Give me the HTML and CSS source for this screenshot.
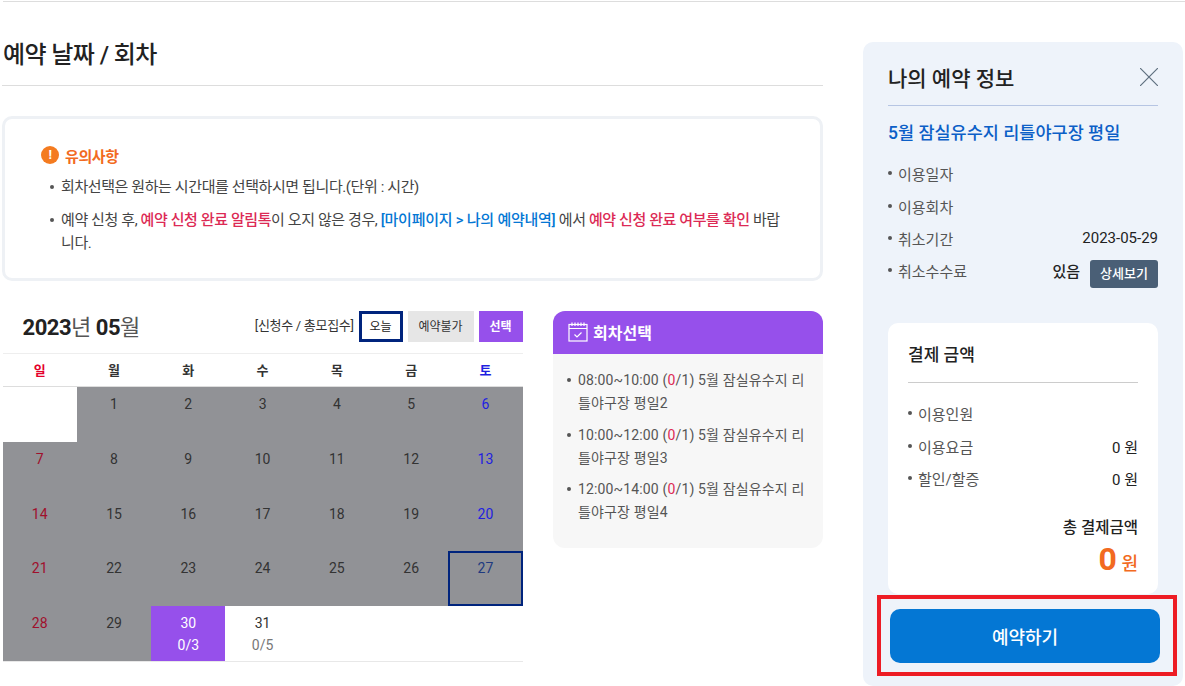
FILE: index.html
```html
<!DOCTYPE html>
<html lang="ko">
<head>
    <meta charset="UTF-8">
    <meta name="viewport" content="width=device-width, initial-scale=1.0">
    <title>예약 날짜 / 회차</title>
    <link rel="stylesheet" href="styles.css">
</head>
<body>
    <div class="top-line"></div>
    <div class="layout">
        <div class="main">
            <h2 class="page-title">예약 날짜 / 회차</h2>

            <div class="notice">
                <div class="notice-title">
                    <span class="notice-icon">!</span>
                    유의사항
                </div>
                <ul class="notice-list">
                    <li>회차선택은 원하는 시간대를 선택하시면 됩니다.(단위 : 시간)</li>
                    <li>예약 신청 후, <b class="red">예약 신청 완료 알림톡</b>이 오지 않은 경우, <b class="blue">[마이페이지 &gt; 나의 예약내역]</b> 에서 <b class="red">예약 신청 완료 여부를 확인</b> 바랍니다.</li>
                </ul>
            </div>

            <div class="booking">
                <div class="calendar">
                    <div class="cal-head">
                        <div class="cal-month"><b>2023</b>년 <b>05</b>월</div>
                        <div class="legend">
                            <span class="legend-text">[신청수 / 총모집수]</span>
                            <span class="legend-box today">오늘</span>
                            <span class="legend-box closed">예약불가</span>
                            <span class="legend-box selected">선택</span>
                        </div>
                    </div>
                    <div class="cal-week">
                        <div class="sun">일</div>
                        <div>월</div>
                        <div>화</div>
                        <div>수</div>
                        <div>목</div>
                        <div>금</div>
                        <div class="sat">토</div>
                    </div>
                    <div class="cal-grid">
                        <div class="cell"></div>
                        <div class="cell off">1</div>
                        <div class="cell off">2</div>
                        <div class="cell off">3</div>
                        <div class="cell off">4</div>
                        <div class="cell off">5</div>
                        <div class="cell off sat">6</div>
                        <div class="cell off sun">7</div>
                        <div class="cell off">8</div>
                        <div class="cell off">9</div>
                        <div class="cell off">10</div>
                        <div class="cell off">11</div>
                        <div class="cell off">12</div>
                        <div class="cell off sat">13</div>
                        <div class="cell off sun">14</div>
                        <div class="cell off">15</div>
                        <div class="cell off">16</div>
                        <div class="cell off">17</div>
                        <div class="cell off">18</div>
                        <div class="cell off">19</div>
                        <div class="cell off sat">20</div>
                        <div class="cell off sun">21</div>
                        <div class="cell off">22</div>
                        <div class="cell off">23</div>
                        <div class="cell off">24</div>
                        <div class="cell off">25</div>
                        <div class="cell off">26</div>
                        <div class="cell off sat is-today">27</div>
                        <div class="cell off sun">28</div>
                        <div class="cell off">29</div>
                        <div class="cell picked">30<span class="count">0/3</span></div>
                        <div class="cell">31<span class="count">0/5</span></div>
                        <div class="cell"></div>
                        <div class="cell"></div>
                        <div class="cell"></div>
                    </div>
                </div>

                <div class="rounds">
                    <div class="rounds-head">
                        <svg width="20" height="20" viewBox="0 0 20 20" fill="none" stroke="#fff" stroke-width="1.2">
                            <rect x="1" y="2.5" width="18" height="16.5"/>
                            <path d="M1 6.5h18M4 .5v3.5M7 .5v3.5M10 .5v3.5M13 .5v3.5M16 .5v3.5"/>
                            <path d="M6.5 12.5l2.5 2.5 4.5-4.5"/>
                        </svg>
                        회차선택
                    </div>
                    <ul class="rounds-list">
                        <li>08:00~10:00 (<span class="zero">0</span>/1) 5월 잠실유수지 리틀야구장 평일2</li>
                        <li>10:00~12:00 (<span class="zero">0</span>/1) 5월 잠실유수지 리틀야구장 평일3</li>
                        <li>12:00~14:00 (<span class="zero">0</span>/1) 5월 잠실유수지 리틀야구장 평일4</li>
                    </ul>
                </div>
            </div>
        </div>

        <div class="side">
            <div class="side-head">
                <h3>나의 예약 정보</h3>
                <svg width="18" height="18" viewBox="0 0 18 18" stroke="#5f7080" stroke-width="1.2">
                    <path d="M0 0l18 18M18 0L0 18"/>
                </svg>
            </div>
            <div class="side-name">5월 잠실유수지 리틀야구장 평일</div>
            <ul class="info-list">
                <li><span class="info-label">이용일자</span></li>
                <li><span class="info-label">이용회차</span></li>
                <li><span class="info-label">취소기간</span><span class="info-value">2023-05-29</span></li>
                <li class="fee-row"><span class="info-label">취소수수료</span><span class="info-value"><b>있음</b><a class="detail-btn">상세보기</a></span></li>
            </ul>

            <div class="pay-card">
                <h4>결제 금액</h4>
                <ul class="info-list">
                    <li><span class="info-label">이용인원</span></li>
                    <li><span class="info-label">이용요금</span><span class="info-value">0 원</span></li>
                    <li><span class="info-label">할인/할증</span><span class="info-value">0 원</span></li>
                </ul>
                <div class="total-label">총 결제금액</div>
                <div class="total-value"><b>0</b> 원</div>
            </div>

            <button class="reserve-btn">예약하기</button>
            <div class="red-frame"></div>
        </div>
    </div>
</body>
</html>
```

FILE: styles.css
```css
html, body {
    margin: 0;
    height: 686px;
    overflow: hidden;
    background-color: #fff;
    font-family: Roboto, "Noto Sans CJK KR", sans-serif;
    color: #333;
}
ul {
    margin: 0;
    padding: 0;
    list-style: none;
}
.top-line {
    height: 1px;
    margin: 1px 0 0 3px;
    background-color: #ddd;
}
.layout {
    display: flex;
    padding: 40px 0 0 2px;
}
.main {
    width: 821px;
}
.page-title {
    height: 44px;
    margin: 0;
    padding: 1px 0 0 1px;
    box-sizing: border-box;
    border-bottom: 1px solid #ddd;
    font-size: 24px;
    line-height: 24px;
    font-weight: 500;
    color: #222;
    letter-spacing: -0.6px;
}

/* 유의사항 */
.notice {
    box-sizing: border-box;
    height: 165px;
    margin-top: 30px;
    padding: 26px 35px 0 36px;
    border: 3px solid #eef1f5;
    border-radius: 10px;
    font-size: 15px;
    letter-spacing: -0.4px;
}
.notice-title {
    display: flex;
    align-items: center;
    gap: 6px;
    height: 20px;
    font-size: 15px;
    font-weight: 700;
    color: #f26a21;
}
.notice-icon {
    width: 18px;
    height: 18px;
    border-radius: 50%;
    background-color: #f47b20;
    color: #fff;
    font-size: 13px;
    line-height: 18px;
    text-align: center;
}
.notice-list {
    margin-top: 11px;
}
.notice-list li {
    position: relative;
    padding-left: 20px;
    margin-bottom: 10px;
    line-height: 23px;
    color: #444;
}
.notice-list li::before,
.rounds-list li::before,
.info-label::before {
    content: '';
    position: absolute;
    left: 9px;
    top: 9px;
    width: 4px;
    height: 4px;
    border-radius: 50%;
    background-color: #555;
}
.notice-list b {
    font-weight: 500;
}
.red {
    color: #dc2a55;
}
.blue {
    color: #0477d4;
    letter-spacing: -0.25px;
}

/* 달력 */
.booking {
    display: flex;
    align-items: flex-start;
    margin-top: 29px;
}
.calendar {
    width: 520px;
    margin-left: 0.6px;
}
.cal-head {
    display: flex;
    justify-content: space-between;
    align-items: center;
    height: 32px;
    padding-left: 20px;
}
.cal-month {
    margin-bottom: 3px;
    font-size: 22px;
    letter-spacing: -0.5px;
    color: #555;
}
.cal-month b {
    color: #222;
}
.legend {
    display: flex;
    align-items: center;
    font-size: 13px;
}
.legend-text {
    margin: 0 5px 3px 0;
    letter-spacing: -0.3px;
}
.legend-box {
    box-sizing: border-box;
    height: 31px;
    margin-left: 5px;
    font-size: 12px;
    line-height: 33px;
    text-align: center;
}
.legend-box.today {
    width: 44px;
    margin-left: 0;
    border: 3px solid #00247d;
    line-height: 27px;
    color: #222;
}
.legend-box.closed {
    width: 66px;
    background-color: #e6e6e6;
}
.legend-box.selected {
    width: 44px;
    background-color: #9650eb;
    color: #fff;
    font-weight: 700;
}
.cal-week {
    display: grid;
    grid-template-columns: repeat(7, 1fr);
    height: 32px;
    margin-top: 11px;
    border-top: 1px solid #eee;
    border-bottom: 1px solid #ddd;
    font-size: 13px;
    font-weight: 700;
    line-height: 33px;
    text-align: center;
}
.cal-week .sun {
    color: #e4002b;
}
.cal-week .sat {
    color: #1f1fe0;
}
.cal-grid {
    display: grid;
    grid-template-columns: repeat(7, 1fr);
    grid-auto-rows: 54.8px;
    border-bottom: 1px solid #e8e8e8;
}
.cell {
    box-sizing: border-box;
    padding-top: 7px;
    font-size: 14px;
    line-height: 20px;
    text-align: center;
}
.cell.off {
    background-color: #919296;
}
.cell.sun {
    color: #a0102c;
}
.cell.sat {
    color: #1f1fe0;
}
.cell.is-today {
    padding-top: 5px;
    border: 2px solid #00247d;
    color: #1f3a80;
}
.cell.picked {
    background-color: #9650eb;
    color: #fff;
}
.count {
    display: block;
    margin-top: 2px;
    color: #777;
}
.picked .count {
    color: #fff;
}

/* 회차선택 */
.rounds {
    width: 270px;
    margin: 1px 0 0 30.4px;
    border-radius: 12px;
    background-color: #f7f7f7;
    overflow: hidden;
}
.rounds-head {
    box-sizing: border-box;
    display: flex;
    align-items: center;
    gap: 5px;
    height: 43px;
    padding: 0 0 2px 15px;
    background-color: #9650eb;
    color: #fff;
    font-size: 16px;
    font-weight: 700;
}
.rounds-list {
    padding: 15px 15px 15px 25px;
}
.rounds-list li {
    position: relative;
    margin-bottom: 8.5px;
    font-size: 14px;
    line-height: 23px;
    letter-spacing: 0.15px;
    color: #555;
}
.rounds-list li::before {
    left: -11px;
}
.zero {
    color: #dc2a55;
}

/* 나의 예약 정보 */
.side {
    position: relative;
    box-sizing: border-box;
    width: 320px;
    height: 644px;
    margin-left: 40px;
    padding: 0 25px;
    border-radius: 10px;
    background-color: #eef3fa;
}
.side-head {
    display: flex;
    justify-content: space-between;
    align-items: center;
    height: 63px;
    border-bottom: 1px solid #b6c5e3;
}
.side-head h3 {
    margin: 6px 0 0;
    font-size: 21px;
    font-weight: 500;
    color: #222;
}
.side-head svg {
    margin-top: 6px;
}
.side-name {
    margin-top: 15px;
    font-size: 17.5px;
    font-weight: 500;
    line-height: 24px;
    color: #0c5fc7;
}
.side > .info-list {
    margin-top: 12.5px;
}
.info-list li {
    display: flex;
    justify-content: space-between;
    align-items: center;
    height: 32.4px;
    font-size: 15px;
}
.info-label {
    position: relative;
    padding-left: 10px;
    color: #555;
}
.info-label::before {
    left: 0;
    top: 8px;
}
.info-value {
    display: flex;
    align-items: center;
    color: #222;
}
.info-value b {
    font-weight: 500;
}
.detail-btn {
    width: 68px;
    height: 28px;
    margin: 7px 0 0 10px;
    border-radius: 3px;
    background-color: #4a5f76;
    color: #fff;
    font-size: 13px;
    font-weight: 500;
    line-height: 28px;
    text-align: center;
}

/* 결제 금액 */
.pay-card {
    box-sizing: border-box;
    height: 271px;
    margin-top: 35.5px;
    padding: 0 20px;
    border-radius: 10px;
    background-color: #fff;
}
.pay-card h4 {
    height: 59px;
    margin: 0;
    border-bottom: 1px solid #ccc;
    font-size: 17px;
    font-weight: 500;
    line-height: 64px;
    color: #222;
}
.pay-card .info-list {
    margin-top: 15px;
}
.total-label {
    margin-top: 21px;
    font-size: 15.5px;
    font-weight: 500;
    line-height: 24px;
    text-align: right;
    color: #222;
}
.total-value {
    margin-top: 1px;
    font-size: 18px;
    font-weight: 500;
    line-height: 36px;
    text-align: right;
    color: #f26a21;
}
.total-value b {
    font-size: 32px;
    font-weight: 700;
}
.reserve-btn {
    display: block;
    width: 270px;
    height: 54px;
    margin: 15px 0 0 2px;
    border: none;
    border-radius: 10px;
    background-color: #0477d4;
    color: #fff;
    font-family: inherit;
    font-size: 18px;
    font-weight: 500;
}
.red-frame {
    position: absolute;
    left: 14px;
    top: 553px;
    width: 292px;
    height: 73px;
    border: 4px solid #ed1c24;
}
```
